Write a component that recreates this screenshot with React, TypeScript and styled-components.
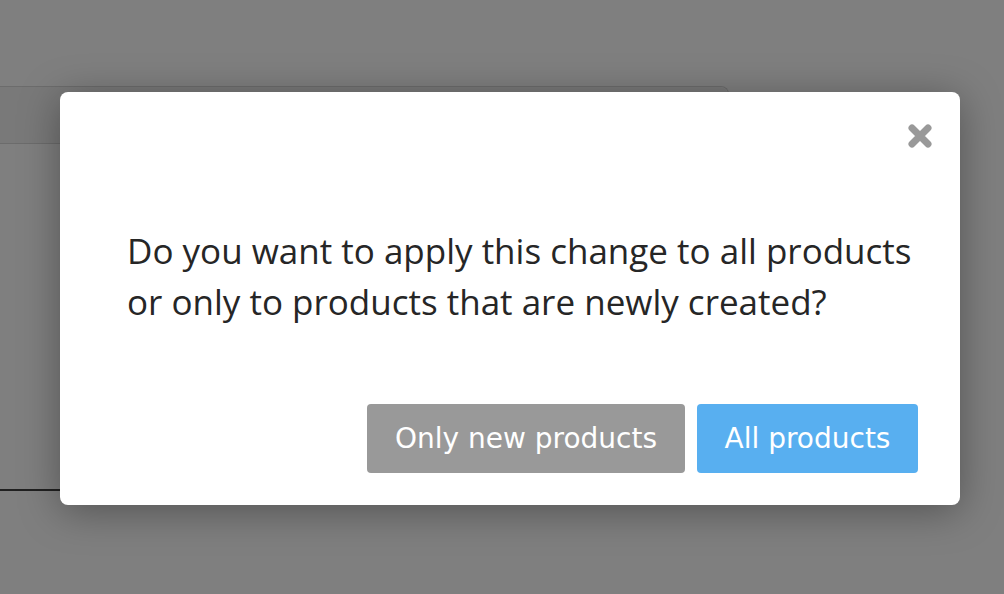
import React from "react";
import styled, { createGlobalStyle } from "styled-components";

const Global = createGlobalStyle`
  html, body { margin: 0; padding: 0; }
  body { width: 1004px; height: 594px; overflow: hidden; background: #ffffff; font-family: "Open Sans", sans-serif; }
`;

const Page = styled.div`
  position: relative;
  width: 1004px;
  height: 594px;
  background: #ffffff;
  padding-top: 86px;
  box-sizing: border-box;
`;

const BackPanel = styled.div`
  width: 739px;
  height: 405px;
  margin-left: -10px;
  border: 1px solid #d8d8d8;
  border-bottom: 2px solid #404040;
  border-radius: 0 8px 0 0;
  box-sizing: border-box;
  display: flex;
  flex-direction: column;
`;

const BackHeader = styled.div`
  height: 56px;
  background: #f2f2f2;
  border-bottom: 1px solid #d8d8d8;
  border-radius: 0 8px 0 0;
`;

const Overlay = styled.div`
  position: absolute;
  inset: 0;
  background: rgba(0, 0, 0, 0.5);
  display: flex;
  align-items: flex-start;
  justify-content: flex-start;
  padding: 92px 0 0 60px;
  box-sizing: border-box;
`;

const Modal = styled.div`
  width: 900px;
  height: 413px;
  background: #ffffff;
  border-radius: 8px;
  box-shadow: 0 6px 40px rgba(0, 0, 0, 0.35);
  box-sizing: border-box;
  padding: 0 42px 32px 67px;
  display: flex;
  flex-direction: column;
  position: relative;
`;

const Close = styled.button`
  position: absolute;
  top: 30px;
  right: 26px;
  width: 28px;
  height: 28px;
  padding: 0;
  border: none;
  background: transparent;
  display: flex;
  align-items: center;
  justify-content: center;
  cursor: pointer;
`;

const Message = styled.p`
  margin: 133px 0 0 0;
  font-family: "Open Sans", sans-serif;
  font-size: 35px;
  line-height: 51px;
  color: #262626;
  white-space: nowrap;
`;

const Actions = styled.div`
  margin-top: auto;
  display: flex;
  justify-content: flex-end;
  gap: 12px;
`;

const Button = styled.button<{ $variant: "muted" | "primary" }>`
  height: 69px;
  width: ${(p) => (p.$variant === "primary" ? "221px" : "318px")};
  padding: 0;
  border: none;
  border-radius: 4px;
  background: ${(p) => (p.$variant === "primary" ? "#58aff0" : "#999999")};
  color: #ffffff;
  font-family: "DejaVu Sans", Verdana, sans-serif;
  font-size: 28px;
  white-space: nowrap;
  cursor: pointer;
`;

export default function App() {
  return (
    <>
      <Global />
      <Page>
        <BackPanel>
          <BackHeader />
        </BackPanel>
        <Overlay>
          <Modal>
            <Close aria-label="Close">
              <svg width="28" height="28" viewBox="0 0 28 28">
                <path d="M6 6 L22 22 M22 6 L6 22" stroke="#999999" strokeWidth="7" strokeLinecap="round" />
              </svg>
            </Close>
            <Message>
              Do you want to apply this change to all products
              <br />
              or only to products that are newly created?
            </Message>
            <Actions>
              <Button $variant="muted">Only new products</Button>
              <Button $variant="primary">All products</Button>
            </Actions>
          </Modal>
        </Overlay>
      </Page>
    </>
  );
}
